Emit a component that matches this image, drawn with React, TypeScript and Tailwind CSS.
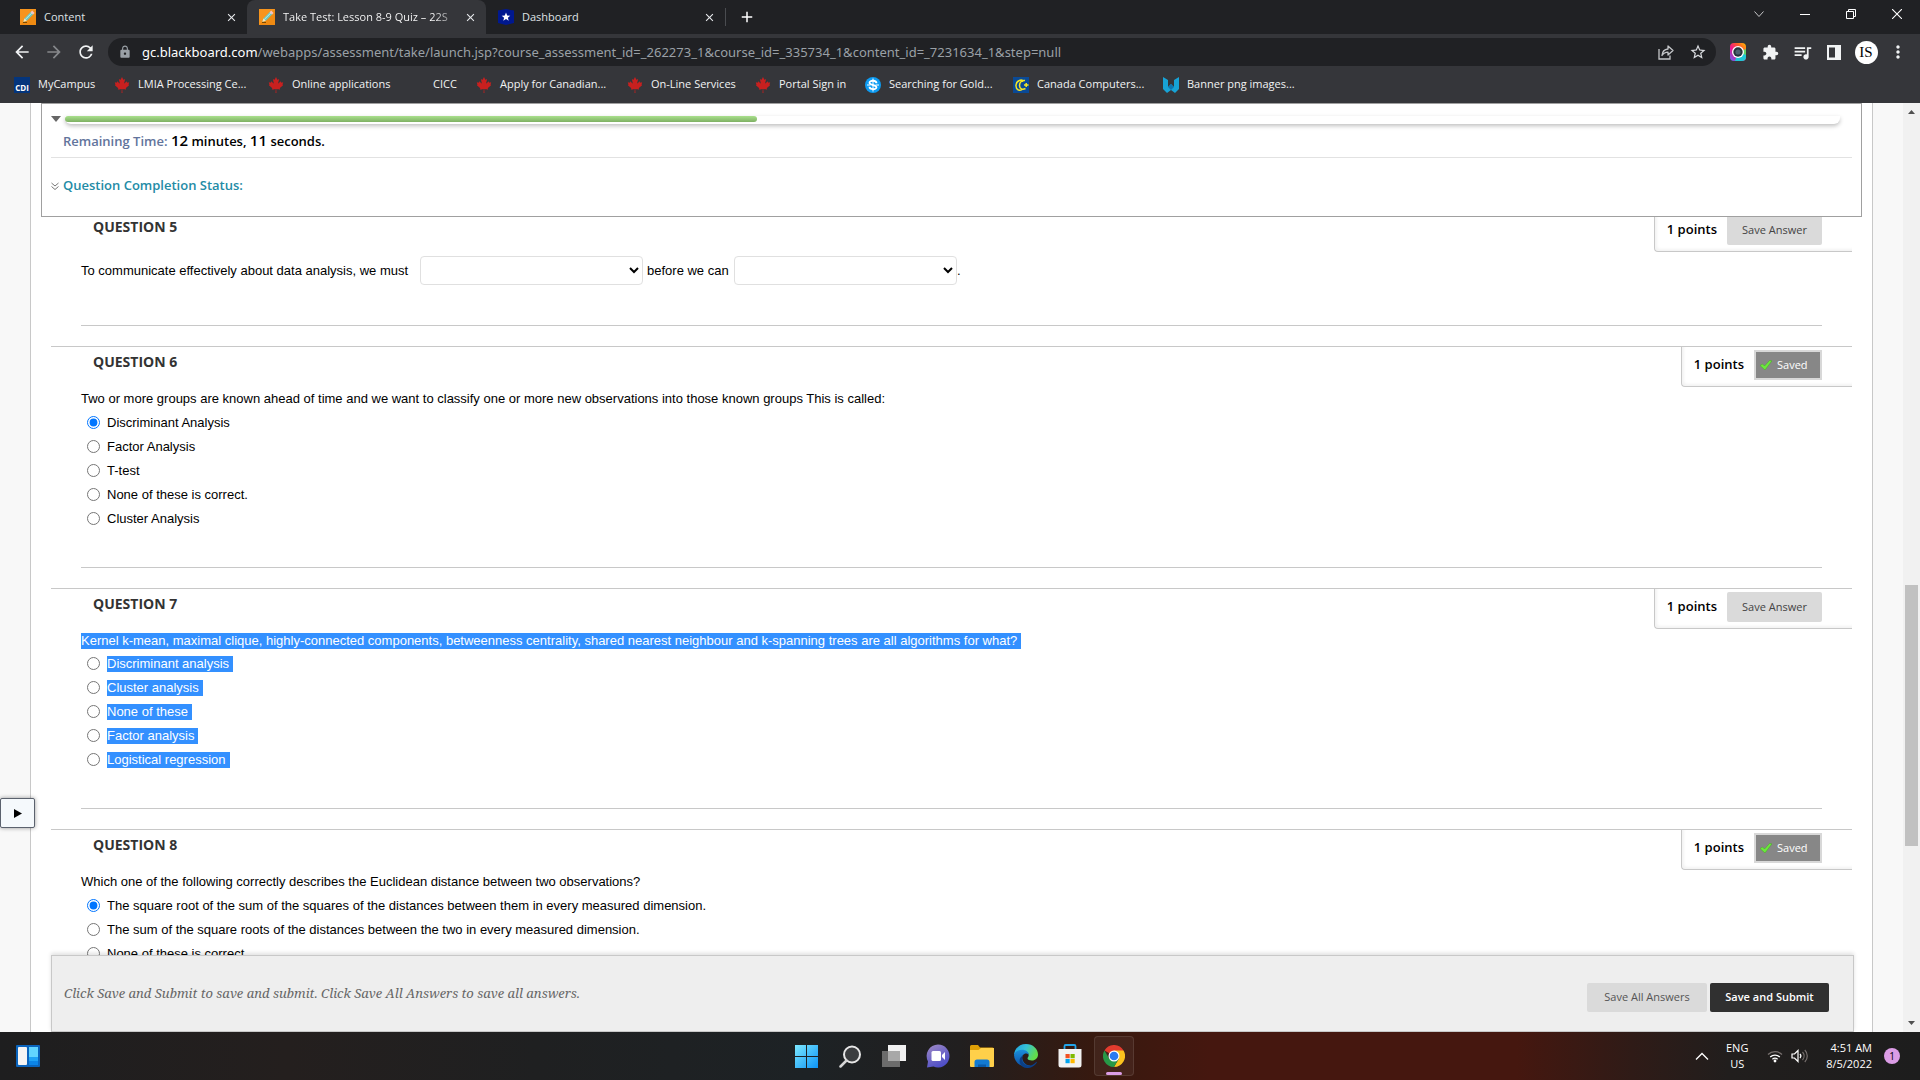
import React from "react";
import {
  MdArrowBack,
  MdArrowForward,
  MdRefresh,
  MdLock,
  MdStarBorder,
  MdExtension,
  MdQueueMusic,
  MdMoreVert,
  MdAdd,
  MdClose,
} from "react-icons/md";
import { FaCanadianMapleLeaf } from "react-icons/fa";

const UI = "font-['Open_Sans','Noto_Sans',sans-serif]";

function PencilIcon() {
  return (
    <svg viewBox="0 0 16 16" className="size-4 shrink-0">
      <rect width="16" height="16" fill="#f7941d" />
      <path d="M0 16 16 0v16z" fill="#ef8a12" />
      <path d="M3.4 12.8l1-3.4 6.8-6.8 2.4 2.4-6.8 6.8z" fill="#6fc7c0" />
      <path d="M5.2 10.6 12 3.8" stroke="#c8efe9" strokeWidth="0.9" />
      <path d="M10.6 3.2 12.2 1.600l2.400 2.400-1.600 1.600z" fill="#f6c4c4" />
      <path d="M3.400 12.800l1-3.400 2.400 2.400z" fill="#fbe3b5" />
      <path d="M3 13.500h4" stroke="#5d3a00" strokeWidth="0.800" />
    </svg>
  );
}

function DashboardIcon() {
  return (
    <svg viewBox="0 0 16 16" className="size-4 shrink-0">
      <path d="M0 1.500 8 0l8 1.500V14l-8 2-8-2z" fill="#00188f" />
      <path d="M8 3.600l1.200 2.900 3.100.2-2.400 2 .8 3L8 10.100l-2.700 1.600.8-3-2.400-2 3.100-.2z" fill="#fff" />
    </svg>
  );
}

function Tab({ icon, title, active }: { icon: React.ReactNode; title: string; active?: boolean }) {
  return (
    <div
      className={
        active
          ? "flex h-full w-[239px] items-center gap-2 rounded-t-lg bg-[#35363a] pl-3 pr-2"
          : "flex h-full w-[239px] items-center gap-2 pl-3 pr-2"
      }
    >
      {icon}
      <span
        className={
          active
            ? "flex-1 whitespace-nowrap bg-linear-to-r from-white from-88% to-white/30 bg-clip-text text-transparent"
            : "flex-1 whitespace-nowrap text-[#dfe1e5]"
        }
      >
        {title}
      </span>
      <button aria-label="Close tab" className="grid size-4 place-items-center text-[#e8eaed]">
        <MdClose size={13} />
      </button>
    </div>
  );
}

function TabStrip() {
  return (
    <div className="flex h-[34px] items-stretch bg-[#202124] text-[11px]">
      <div className="flex pl-2">
        <Tab icon={<PencilIcon />} title="Content" />
        <Tab icon={<PencilIcon />} title="Take Test: Lesson 8-9 Quiz – 22S" active />
        <Tab icon={<DashboardIcon />} title="Dashboard" />
      </div>
      <div className="my-2 w-px bg-[#4a4c50]" />
      <button aria-label="New tab" className="ml-3 text-white">
        <MdAdd size={18} />
      </button>
      <div className="ml-auto flex h-7 text-white">
        <button aria-label="Search tabs" className="grid w-[46px] place-items-center">
          <svg width="10" height="10" viewBox="0 0 10 10" fill="none" stroke="#c6c7c9">
            <path d="M.5 2.500 5 7.500 9.500 2.500" />
          </svg>
        </button>
        <button aria-label="Minimize" className="grid w-[46px] place-items-center">
          <span className="h-px w-2.5 bg-white" />
        </button>
        <button aria-label="Restore" className="grid w-[46px] place-items-center">
          <svg width="10" height="10" viewBox="0 0 10 10" fill="none" stroke="#fff">
            <path d="M.5 2.500h7v7h-7zM2.500 2.500v-2h7v7h-2" />
          </svg>
        </button>
        <button aria-label="Close" className="grid w-[46px] place-items-center">
          <svg width="10" height="10" viewBox="0 0 10 10" fill="none" stroke="#fff" strokeWidth="1.100">
            <path d="M0 0l10 10M10 0 0 10" />
          </svg>
        </button>
      </div>
    </div>
  );
}

function AddressBar() {
  return (
    <div className="flex h-9 items-center bg-[#35363a] text-[#f1f3f4]">
      <div className="flex w-[108px] gap-3 pl-3">
        <button aria-label="Back"><MdArrowBack size={20} /></button>
        <button aria-label="Forward" className="text-[#86888b]"><MdArrowForward size={20} /></button>
        <button aria-label="Reload"><MdRefresh size={20} /></button>
      </div>
      <div className="flex h-7 flex-1 items-center rounded-full bg-[#202124] pl-2.5 pr-0.5 text-[13px]">
        <MdLock size={14} className="text-[#9aa0a6]" />
        <p className="ml-2.5 flex-1 pt-0.5 font-['Noto_Sans',sans-serif] text-[#9aa0a6]">
          <span className="text-white">gc.blackboard.com</span>
          /webapps/assessment/take/launch.jsp?course_assessment_id=_262273_1&amp;course_id=_335734_1&amp;content_id=_7231634_1&amp;step=null
        </p>
        <button aria-label="Share" className="grid w-8 place-items-center text-[#c4c6c9]">
          <svg width="16" height="16" viewBox="0 0 16 16" fill="none" stroke="currentColor" strokeWidth="1.300">
            <path d="M1 5v10h11v-3.500" />
            <path d="M4 11.500C4.300 7.500 6.500 5.300 10 5V2l5 4.500-5 4.500V8.200C7.500 8.200 5.500 9.200 4 11.500z" strokeLinejoin="round" />
          </svg>
        </button>
        <button aria-label="Bookmark" className="grid w-8 place-items-center text-[#dadce0]"><MdStarBorder size={18} /></button>
      </div>
      <div className="flex w-[204px] pl-1.5">
        <button aria-label="Camera" className="grid w-8 place-items-center">
          <svg width="16" height="18" viewBox="0 0 16 18">
            <defs>
              <linearGradient id="cam" x1="0" y1="1" x2="1" y2="0">
                <stop offset="0" stopColor="#5b6cff" />
                <stop offset=".4" stopColor="#f0148c" />
                <stop offset=".7" stopColor="#ff5a2a" />
                <stop offset="1" stopColor="#ffc400" />
              </linearGradient>
              <clipPath id="camClip"><rect width="16" height="18" rx="4" /></clipPath>
            </defs>
            <g clipPath="url(#camClip)">
              <rect width="16" height="18" fill="url(#cam)" />
              <path d="M16 8v10H5l3-9z" fill="#1fc8d8" />
              <path d="M16 6v6L8 9z" fill="#5fd06a" />
            </g>
            <circle cx="8" cy="9" r="6" fill="#fff" />
            <circle cx="8" cy="9" r="4.700" fill="#26323c" />
            <circle cx="8" cy="9" r="2.600" fill="#4c6170" />
          </svg>
        </button>
        <button aria-label="Extensions" className="grid w-8 place-items-center"><MdExtension size={17} /></button>
        <button aria-label="Media" className="grid w-8 place-items-center"><MdQueueMusic size={21} /></button>
        <button aria-label="Side panel" className="grid w-8 place-items-center">
          <svg width="14" height="15" viewBox="0 0 14 15">
            <path fillRule="evenodd" d="M0 0h14v15H0zM2 2.500v10h6v-10z" fill="#f1f3f4" />
          </svg>
        </button>
        <button aria-label="Profile" className="grid w-8 place-items-center">
          <span className="grid size-[23px] place-items-center rounded-full bg-white font-['Liberation_Serif',serif] text-[15px] leading-none text-black">IS</span>
        </button>
        <button aria-label="Menu" className="grid w-8 place-items-center"><MdMoreVert size={20} /></button>
      </div>
    </div>
  );
}

const leaf = <FaCanadianMapleLeaf size={16} className="text-[#c8201f]" />;

const bookmarks: { label: string; width: string; icon: React.ReactNode }[] = [
  {
    label: "MyCampus",
    width: "w-[100px]",
    icon: (
      <span className="flex size-4 items-end justify-center overflow-hidden bg-[#04357c] text-[8px] font-bold leading-[11px] text-white">CDI</span>
    ),
  },
  { label: "LMIA Processing Ce...", width: "w-[154px]", icon: leaf },
  { label: "Online applications", width: "w-[141px]", icon: leaf },
  { label: "CICC", width: "w-[67px]", icon: null },
  { label: "Apply for Canadian...", width: "w-[151px]", icon: leaf },
  { label: "On-Line Services", width: "w-[128px]", icon: leaf },
  { label: "Portal Sign in", width: "w-[110px]", icon: leaf },
  {
    label: "Searching for Gold...",
    width: "w-[148px]",
    icon: (
      <svg viewBox="0 0 16 16" className="size-4">
        <circle cx="8" cy="8" r="8" fill="#0d9bf2" />
        <path d="M11.500 6.200C11.500 3 4.500 3 4.500 5.700S11.500 7.800 11.500 10.300 4.500 13 4.500 9.800" fill="none" stroke="#fff" strokeWidth="1.800" />
        <path d="M8 1.500v13M2 8h3.500M10.500 8H14" fill="none" stroke="#fff" strokeWidth="1" />
      </svg>
    ),
  },
  {
    label: "Canada Computers...",
    width: "w-[150px]",
    icon: (
      <svg viewBox="0 0 16 16" className="size-4">
        <rect width="16" height="16" fill="#0a4a96" />
        <path d="M10.500 4.500C9 2 3.500 3 3 8s4 6.500 7 4M12 3.500C9 3 6.500 5 6.500 8.500s3 4.500 6 3M11 8h4.500M13.200 6v4" fill="none" stroke="#f5e625" strokeWidth="1.500" />
      </svg>
    ),
  },
  {
    label: "Banner png images...",
    width: "w-[150px]",
    icon: (
      <svg viewBox="0 0 16 16" className="size-4">
        <path d="M0 0l5 3v7l3-3 3 3V3l5-3v12l-4 4-4-3-4 3-4-4z" fill="#17a3d6" />
        <path d="M5 10l3-3 3 3-3 3z" fill="#0c76b2" />
      </svg>
    ),
  },
];

function BookmarksBar() {
  return (
    <nav className="flex h-9 items-center border-b border-[#5b5c60] bg-[#35363a] pl-3.5 pb-1.5 text-[11px] text-[#f1f3f4]">
      {bookmarks.map((b) => (
        <a key={b.label} href="#" className={"flex shrink-0 items-center gap-2 whitespace-nowrap " + b.width}>
          <span className="grid size-4 shrink-0 place-items-center">{b.icon}</span>
          {b.label}
        </a>
      ))}
    </nav>
  );
}

function TimerPanel() {
  return (
    <div className="absolute left-2.5 right-2.5 top-0 z-10 h-[114px] border border-[#a0a0a0] bg-white px-[9px] text-[13px] font-semibold">
      <div className="flex pt-3">
        <button aria-label="Hide timer" className="flex h-2 w-3.5 items-start">
          <svg width="12" height="6" viewBox="0 0 12 6"><path d="M0 0h10L5 6z" fill="#666" /></svg>
        </button>
        <div className="mr-3 h-2 flex-1 rounded-b-md bg-white shadow-[0_2px_4px_rgba(0,0,0,0.25)]">
          <div className="h-1.5 w-[39%] rounded-sm bg-linear-to-b from-[#a9e08c] to-[#7eb063]" />
        </div>
      </div>
      <p className="ml-3 mt-1 h-6 leading-6 text-black">
        <span className="text-[#62749c]">Remaining Time:</span> <span className="text-[15px]">12</span> minutes, <span className="text-[15px]">11</span> seconds.
      </p>
      <div className="mt-[5px] border-t border-[#e2e2e2]" />
      <button className="mt-[18px] flex h-5 items-center gap-1 text-[#238ba6]">
        <svg width="8" height="9" viewBox="0 0 8 9" fill="none" stroke="#777">
          <path d="M.5 1 4 4l3.500-3M.5 4.500 4 7.500l3.500-3" />
        </svg>
        Question Completion Status:
      </button>
    </div>
  );
}

function CheckMark() {
  return (
    <svg width="12" height="10" viewBox="0 0 12 10">
      <path d="M0 5.500 2.500 4 4.500 6 9.500.5 12 .8 5 10z" fill="#6be83c" stroke="#3da51c" strokeWidth="0.400" />
    </svg>
  );
}

type Question = {
  number: number;
  saved?: boolean;
  selected?: boolean;
  text: React.ReactNode;
  options?: string[];
  answer?: number;
};

function Blank({ label }: { label: string }) {
  return (
    <select aria-label={label} className="h-[29px] w-[223px] rounded border border-[#e0e0e0] bg-white text-black">
      <option />
    </select>
  );
}

const questions: Question[] = [
  {
    number: 5,
    text: (
      <div className="mt-1 mb-10 flex h-[29px] items-center gap-1">
        <span className="w-[335px]">To communicate effectively about data analysis, we must</span>
        <Blank label="First blank" />
        <span className="w-[83px]">before we can</span>
        <span className="flex items-center">
          <Blank label="Second blank" />.
        </span>
      </div>
    ),
  },
  {
    number: 6,
    saved: true,
    text: "Two or more groups are known ahead of time and we want to classify one or more new observations into those known groups This is called:",
    options: ["Discriminant Analysis", "Factor Analysis", "T-test", "None of these is correct.", "Cluster Analysis"],
    answer: 0,
  },
  {
    number: 7,
    selected: true,
    text: "Kernel k-mean, maximal clique, highly-connected components, betweenness centrality, shared nearest neighbour and k-spanning trees are all algorithms for what?",
    options: ["Discriminant analysis", "Cluster analysis", "None of these", "Factor analysis", "Logistical regression"],
  },
  {
    number: 8,
    saved: true,
    text: "Which one of the following correctly describes the Euclidean distance between two observations?",
    options: [
      "The square root of the sum of the squares of the distances between them in every measured dimension.",
      "The sum of the square roots of the distances between the two in every measured dimension.",
      "None of these is correct.",
    ],
    answer: 0,
  },
];

function QuestionBlock({ q }: { q: Question }) {
  const mark = q.selected ? "bg-[#3390ff] pr-1 leading-4 text-white" : "";
  return (
    <section className="border-t border-[#c8c8c8]">
      <div className="flex h-10 justify-between">
        <h3 className="ml-[42px] mt-[5px] text-[14px] font-bold leading-5 text-[#333]">QUESTION {q.number}</h3>
        <div className="flex items-start rounded-bl border-b border-l border-[#c8c8c8] pl-3 pr-[30px] shadow-[inset_2px_-2px_3px_rgba(0,0,0,0.05)]">
          <span className="mt-[7px] mr-2.5 text-[13px] font-semibold leading-5 text-black">1 points</span>
          {q.saved ? (
            <button className="mt-[3px] flex h-[30px] w-[68px] items-center gap-[5px] border-2 border-[#d8d8d8] bg-[#878787] pl-1 text-[11px] text-white">
              <CheckMark />
              Saved
            </button>
          ) : (
            <button className="mt-[3px] h-[30px] w-[95px] rounded-xs bg-[#dadada] text-[11px] text-[#444]">Save Answer</button>
          )}
        </div>
      </div>
      <div className="ml-[30px] mr-[30px] border-b border-[#c8c8c8] font-['Liberation_Sans',Arial,sans-serif] text-[13px] text-black">
        {q.options ? (
          <fieldset className="pb-[37px] pt-px">
            <legend className="contents">
              <span className={q.selected ? "flex h-[21px] items-center" : "flex h-[22px] items-center"}>
                <span className={mark}>{q.text}</span>
              </span>
            </legend>
            {q.options.map((o, i) => (
              <label key={o} className="flex h-6 items-center gap-[7px] pl-1.5">
                <input type="radio" name={"question" + q.number} defaultChecked={q.answer === i} className="m-0 size-[13px]" />
                <span className={"mt-0.5 " + mark}>{o}</span>
              </label>
            ))}
          </fieldset>
        ) : (
          q.text
        )}
      </div>
      <div className="h-5" />
    </section>
  );
}

function SubmitBar() {
  return (
    <div className="absolute bottom-0 left-5 right-[18px] z-10 flex h-[77px] items-center justify-between border border-[#c8c8c8] bg-[#eee] pl-3 pr-6 shadow-[0_-2px_4px_rgba(0,0,0,0.12)]">
      <p className="font-['Noto_Serif',Georgia,'Liberation_Serif',serif] text-[13px] italic text-[#666]">
        Click Save and Submit to save and submit. Click Save All Answers to save all answers.
      </p>
      <div className="mt-2 flex gap-[3px] text-[11px]">
        <button className="h-[29px] w-[120px] rounded-xs bg-[#dadada] text-[#555]">Save All Answers</button>
        <button className="h-[29px] w-[119px] rounded-xs bg-[#303030] font-semibold text-white">Save and Submit</button>
      </div>
    </div>
  );
}

function Scrollbar() {
  return (
    <div className="flex w-[17px] flex-col items-center bg-[#f1f1f1] py-[7px]">
      <svg width="7" height="4" viewBox="0 0 7 4"><path d="M0 4 3.500 0 7 4z" fill="#505050" /></svg>
      <div className="flex w-[13px] flex-1 flex-col">
        <div className="flex-[471]" />
        <div className="flex-[261] bg-[#c1c1c1]" />
        <div className="flex-[175]" />
      </div>
      <svg width="7" height="4" viewBox="0 0 7 4"><path d="M0 0h7L3.500 4z" fill="#505050" /></svg>
    </div>
  );
}

function TaskbarIcons() {
  return (
    <>
      <button aria-label="Start" className="grid size-10 place-items-center">
        <svg width="23" height="23" viewBox="0 0 23 23">
          <defs>
            <linearGradient id="win" x1="0" y1="0" x2="1" y2="1">
              <stop offset="0" stopColor="#7ce8ff" />
              <stop offset="1" stopColor="#0c93f5" />
            </linearGradient>
          </defs>
          <path d="M0 0h11v11H0zM12 0h11v11H12zM0 12h11v11H0zM12 12h11v11H12z" fill="url(#win)" />
        </svg>
      </button>
      <button aria-label="Search" className="grid size-10 place-items-center">
        <svg width="23" height="23" viewBox="0 0 23 23">
          <circle cx="13" cy="9.500" r="8" fill="#3b3d3f" stroke="#e6e6e6" strokeWidth="2" />
          <path d="M1.500 21.500 7.500 15.500" stroke="#d5d5d5" strokeWidth="2.500" strokeLinecap="round" />
        </svg>
      </button>
      <button aria-label="Task view" className="grid size-10 place-items-center">
        <svg width="24" height="23" viewBox="0 0 24 23">
          <rect x="6" y="0" width="18" height="16" fill="#f1f1f1" />
          <rect x="0" y="6" width="18" height="16" fill="#6c6c6c" />
          <rect x="6" y="6" width="12" height="10" fill="#a8a8a8" />
        </svg>
      </button>
      <button aria-label="Chat" className="grid size-10 place-items-center">
        <svg width="24" height="24" viewBox="0 0 24 24">
          <defs>
            <linearGradient id="chat" x1="0" y1="0" x2="0.500" y2="1">
              <stop offset="0" stopColor="#a08ac4" />
              <stop offset="1" stopColor="#4f4fc8" />
            </linearGradient>
          </defs>
          <path d="M12 .5a11.500 11.500 0 1 1-4.500 22.100L1 23.500l1-6A11.500 11.500 0 0 1 12 .5z" fill="url(#chat)" />
          <rect x="5.500" y="7" width="9.500" height="10" rx="1.500" fill="#fff" />
          <path d="M16 11l3-3v8l-3-3z" fill="#fff" />
        </svg>
      </button>
      <button aria-label="File Explorer" className="grid size-10 place-items-center">
        <svg width="24" height="22" viewBox="0 0 24 22">
          <path d="M0 1.500A1.500 1.500 0 0 1 1.500 0H8l2 2.500h12.500A1.500 1.500 0 0 1 24 4v6H0z" fill="#e0a006" />
          <path d="M0 5h8.500L11 3h13v18a1 1 0 0 1-1 1H1a1 1 0 0 1-1-1z" fill="#ffd04a" />
          <path d="M4.500 22v-5a2.500 2.500 0 0 1 2.500-2.500h10a2.500 2.500 0 0 1 2.500 2.500v5z" fill="#127ad1" />
          <path d="M8 22v-2.500h8V22z" fill="#0a5ba8" />
        </svg>
      </button>
      <button aria-label="Edge" className="grid size-10 place-items-center">
        <svg width="24" height="24" viewBox="0 0 24 24">
          <defs>
            <linearGradient id="edgeA" x1="0" y1="0" x2="1" y2="0.400">
              <stop offset="0" stopColor="#1d9fe2" />
              <stop offset=".5" stopColor="#35c1d8" />
              <stop offset="1" stopColor="#62dd4b" />
            </linearGradient>
            <linearGradient id="edgeB" x1="0" y1="0" x2="0" y2="1">
              <stop offset="0" stopColor="#1b8fdc" />
              <stop offset="1" stopColor="#0c4fa5" />
            </linearGradient>
          </defs>
          <path d="M0 11C.5 4.500 5.500 0 12 0c7 0 12 5 12 10.500 0 3.500-2.700 6-6 6-2.500 0-4.500-1-4.500-2.300 0-.8 1.200-1.200 1.200-3.200C14.700 8.500 12 7 9 7 4.500 7 1 9 0 11z" fill="url(#edgeA)" />
          <path d="M0 11c1-3.500 4.500-5.200 8-5.200 4 0 6.700 2.200 6.700 5.200-1-1.500-2.700-1.800-4-1.200C8 11 7.500 14 9 17c1.700 3.500 5 4.800 8 4.500A12 12 0 0 1 0 11z" fill="url(#edgeB)" />
          <path d="M9 11.500c-2 3.500-.5 8 3.500 9.800 3 1.300 7-.3 9.700-3.300.3-.4.800.1.600.5C21 22 17 24 13 24 7 24 4.500 18 6 14.500c.7-1.500 1.800-2.500 3-3z" fill="#0b3f86" />
        </svg>
      </button>
      <button aria-label="Store" className="grid size-10 place-items-center">
        <svg width="24" height="24" viewBox="0 0 24 24">
          <path d="M6.500 6V2.200A1.200 1.200 0 0 1 7.700 1h8.600a1.200 1.200 0 0 1 1.200 1.200V6" fill="none" stroke="#22a5ea" strokeWidth="1.800" />
          <path d="M.5 5h23v16a2.500 2.500 0 0 1-2.500 2.500H3A2.500 2.500 0 0 1 .5 21z" fill="#f2f2f2" />
          <path d="M7.500 10h4.200v4.200H7.500z" fill="#f25022" />
          <path d="M12.500 10h4.200v4.200h-4.200z" fill="#7fba00" />
          <path d="M7.500 15h4.200v4.200H7.500z" fill="#00a4ef" />
          <path d="M12.500 15h4.200v4.200h-4.200z" fill="#ffb900" />
        </svg>
      </button>
      <button aria-label="Chrome" className="relative grid size-10 place-items-center rounded border border-white/10 bg-white/5">
        <svg width="22" height="22" viewBox="0 0 48 48">
          <path d="M24 24 3.200 12A24 24 0 0 1 44.800 12z" fill="#e33b2e" />
          <path d="M24 12h20.800A24 24 0 0 1 24 48l10.400-18z" fill="#fcc31e" />
          <path d="M3.200 12A24 24 0 0 0 24 48l10.400-18L24 34 13.600 30z" fill="#279847" />
          <circle cx="24" cy="24" r="12" fill="#fff" />
          <circle cx="24" cy="24" r="9.500" fill="#2a7bf0" />
        </svg>
        <span className="absolute bottom-0 h-[3px] w-4 rounded-full bg-[#dc9de6]" />
      </button>
    </>
  );
}

function Taskbar() {
  return (
    <footer className="grid h-12 grid-cols-[1fr_auto_1fr] items-center bg-[linear-gradient(90deg,#1e1e1f_0%,#241f1e_15%,#1f2021_28%,#1d2225_42%,#211f1f_50%,#37190f_57%,#45170f_63%,#45170f_79%,#2f1b17_85%,#211e1d_90%,#1d1d1d_100%)] text-white">
      <button aria-label="Widgets" className="ml-4 w-6">
        <svg width="24" height="22" viewBox="0 0 24 22">
          <rect width="24" height="22" rx="1" fill="#0a64bd" />
          <rect x="2" y="2" width="9" height="18" rx="1" fill="#f4f4f4" />
          <rect x="13" y="2" width="9" height="10" fill="#62d4ff" />
          <rect x="13" y="12" width="9" height="4" fill="#1fa2f5" />
          <rect x="13" y="16" width="9" height="4" fill="#0c84e6" />
        </svg>
      </button>
      <div className="flex gap-1">
        <TaskbarIcons />
      </div>
      <div className="flex items-center justify-end pr-5 text-[11px] leading-4">
        <button aria-label="Show hidden icons" className="mr-4">
          <svg width="14" height="8" viewBox="0 0 14 8" fill="none" stroke="#fff" strokeWidth="1.300"><path d="M1 7.500 7 1.500l6 6" /></svg>
        </button>
        <button className="mr-[18px] w-6 text-center">ENG US</button>
        <button aria-label="Network and sound" className="mr-[18px] flex gap-2">
          <svg width="16" height="14" viewBox="0 0 16 14" fill="none" strokeWidth="1.300">
            <path d="M1 5.500a10 10 0 0 1 14 0" stroke="#77706e" />
            <path d="M3.200 8a7 7 0 0 1 9.600 0M5.400 10.300a4 4 0 0 1 5.200 0" stroke="#fff" />
            <circle cx="8" cy="12" r="1.400" fill="#fff" />
          </svg>
          <svg width="17" height="14" viewBox="0 0 17 14" fill="none" strokeWidth="1.200">
            <path d="M1 5h2.500L7 1.500v11L3.500 9H1z" stroke="#fff" />
            <path d="M9 5a3 3 0 0 1 0 4" stroke="#fff" />
            <path d="M11.500 3a6 6 0 0 1 0 8M13.800 1a8.500 8.500 0 0 1 0 12" stroke="#77706e" />
          </svg>
        </button>
        <button className="mr-3 text-right">
          4:51 AM
          <br />
          8/5/2022
        </button>
        <span className="grid size-4 place-items-center rounded-full bg-[#dc9de6] text-[10px] text-black">1</span>
      </div>
    </footer>
  );
}

export default function App() {
  return (
    <div className={"flex h-screen flex-col overflow-hidden bg-white " + UI}>
      <TabStrip />
      <AddressBar />
      <BookmarksBar />
      <div className="relative flex min-h-0 flex-1 -mt-[3px] bg-[#f8f8f8]">
        <main className="relative ml-[30px] mr-[30px] flex-1 overflow-hidden border-x border-[#c8c8c8] bg-white">
          <TimerPanel />
          <div className="ml-5 mr-5 pt-[108px]">
            {questions.map((q) => (
              <QuestionBlock key={q.number} q={q} />
            ))}
          </div>
          <SubmitBar />
        </main>
        <Scrollbar />
        <button
          aria-label="Open course menu"
          className="absolute bottom-[204px] left-0 z-20 grid h-[30px] w-[35px] place-items-center rounded-xs border border-[#5b626e] bg-[#f5f9fc] shadow-[0_0_4px_rgba(0,0,0,0.4)]"
        >
          <svg width="8" height="9" viewBox="0 0 8 9"><path d="M0 0l8 4.500L0 9z" fill="#000" /></svg>
        </button>
      </div>
      <Taskbar />
    </div>
  );
}
